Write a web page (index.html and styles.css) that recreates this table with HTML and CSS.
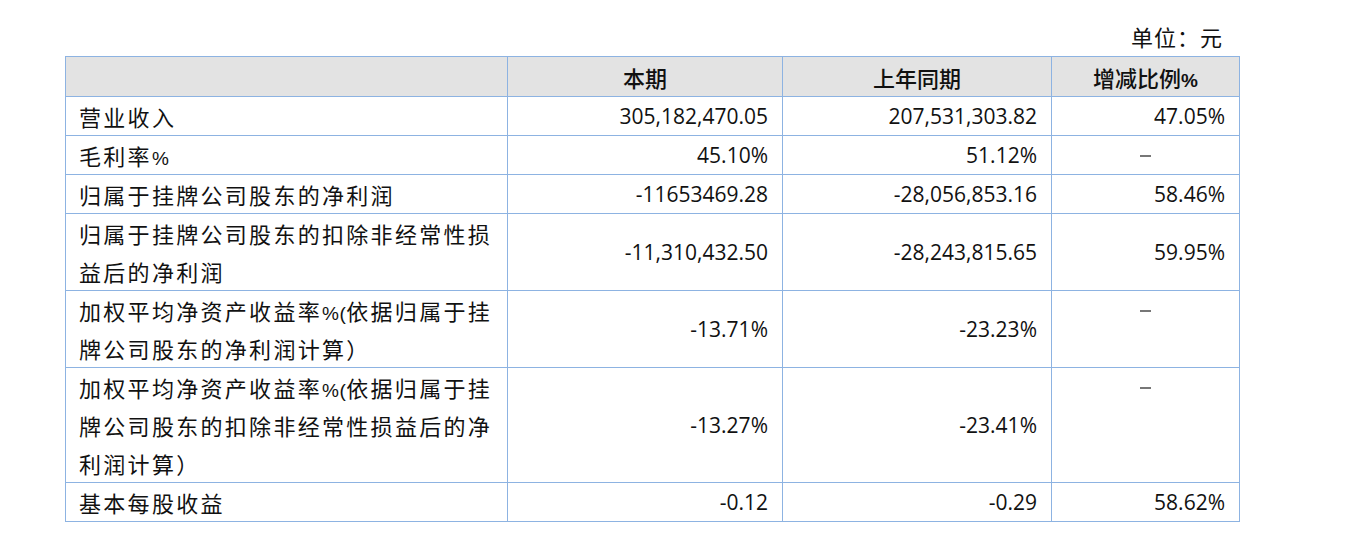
FILE: index.html
```html
<!DOCTYPE html>
<html lang="zh-CN">
<head>
<meta charset="utf-8">
<title>主要财务数据</title>
<link rel="stylesheet" href="styles.css">
</head>
<body>
<div class="page">
  <div class="unit">单位：元</div>
  <table class="fin">
    <colgroup>
      <col class="c1"><col class="c2"><col class="c3"><col class="c4">
    </colgroup>
    <thead>
      <tr>
        <th></th>
        <th>本期</th>
        <th>上年同期</th>
        <th>增减比例<span class="pct">%</span></th>
      </tr>
    </thead>
    <tbody>
      <tr>
        <td class="label">营业收入</td>
        <td class="num">305,182,470.05</td>
        <td class="num">207,531,303.82</td>
        <td class="num">47.05%</td>
      </tr>
      <tr>
        <td class="label">毛利率<span class="pct">%</span></td>
        <td class="num">45.10%</td>
        <td class="num">51.12%</td>
        <td class="dash"><span class="bar"></span></td>
      </tr>
      <tr>
        <td class="label">归属于挂牌公司股东的净利润</td>
        <td class="num">-11653469.28</td>
        <td class="num">-28,056,853.16</td>
        <td class="num">58.46%</td>
      </tr>
      <tr>
        <td class="label">归属于挂牌公司股东的扣除非经常性损<br>益后的净利润</td>
        <td class="num">-11,310,432.50</td>
        <td class="num">-28,243,815.65</td>
        <td class="num">59.95%</td>
      </tr>
      <tr>
        <td class="label">加权平均净资产收益率<span class="pct">%(</span>依据归属于挂<br>牌公司股东的净利润计算）</td>
        <td class="num">-13.71%</td>
        <td class="num">-23.23%</td>
        <td class="dash top"><span class="bar"></span></td>
      </tr>
      <tr>
        <td class="label">加权平均净资产收益率<span class="pct">%(</span>依据归属于挂<br>牌公司股东的扣除非经常性损益后的净<br>利润计算）</td>
        <td class="num">-13.27%</td>
        <td class="num">-23.41%</td>
        <td class="dash top"><span class="bar"></span></td>
      </tr>
      <tr>
        <td class="label">基本每股收益</td>
        <td class="num">-0.12</td>
        <td class="num">-0.29</td>
        <td class="num">58.62%</td>
      </tr>
    </tbody>
  </table>
</div>
</body>
</html>
```
FILE: styles.css
```css
html, body {
  margin: 0;
  padding: 0;
  background: #ffffff;
}

.page {
  padding-left: 65px;
  width: 1174px;
  font-family: "Noto Sans CJK SC", "Noto Sans", sans-serif;
  color: #111;
}

.unit {
  height: 56px;
  box-sizing: border-box;
  padding-top: 19px;
  padding-right: 16px;
  text-align: right;
  font-size: 22px;
  line-height: 34px;
  letter-spacing: 1px;
}

.fin {
  width: 1174px;
  border-collapse: collapse;
  table-layout: fixed;
}

.c1 { width: 442px; }
.c2 { width: 275px; }
.c3 { width: 269px; }
.c4 { width: 188px; }

.fin th,
.fin td {
  border: 1px solid #8db3e2;
  padding: 0 14px;
  font-size: 22px;
  line-height: 38px;
  vertical-align: middle;
}

.fin th {
  background: #e3e3e3;
  font-weight: 500;
  text-align: center;
  height: 39px;
  padding: 0;
}

.fin td.label {
  text-align: left;
  letter-spacing: 2.3px;
  padding-left: 13px;
  white-space: nowrap;
}

.pct {
  font-family: "Liberation Sans", sans-serif;
  font-size: 19px;
  line-height: 1;
  letter-spacing: 0.5px;
}

.fin th .pct {
  letter-spacing: 0;
  font-weight: 700;
}

.fin td.num {
  text-align: right;
  font-family: "Open Sans", "Noto Sans", sans-serif;
  font-size: 21px;
  padding-right: 14px;
}

.fin td.dash {
  text-align: center;
}

.fin td.dash.top {
  vertical-align: top;
}

.bar {
  display: inline-block;
  width: 11px;
  height: 2px;
  background: #777;
  vertical-align: middle;
  position: relative;
  top: -3px;
}
```
